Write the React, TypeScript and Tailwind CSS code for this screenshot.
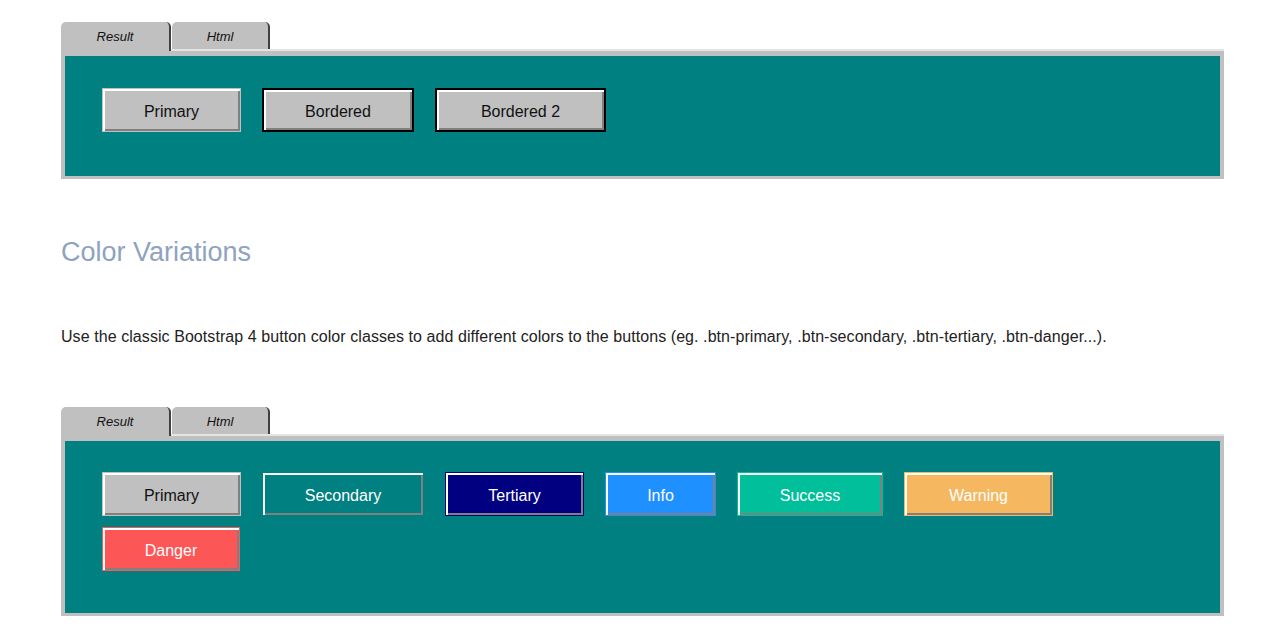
import React from "react";

const font = { fontFamily: '"Liberation Sans", Arial, sans-serif' };

function Tabs() {
  return (
    <div className="flex items-end h-[27px]">
      <div className="relative z-10 w-[110px] h-[29px] -mb-[2px] bg-[#c0c0c0] rounded-t-[5px] border-r-2 border-[#404040] flex items-start justify-center pt-[5px] text-[13px] italic text-[#111]">
        Result
      </div>
      <div className="w-[98px] h-[27px] ml-px bg-[#c0c0c0] rounded-t-[5px] border-r-2 border-[#404040] flex items-start justify-center pt-[5px] text-[13px] italic text-[#111]">
        Html
      </div>
    </div>
  );
}

function Panel({ children, top, bottom }: { children: React.ReactNode; top: string; bottom: string }) {
  return (
    <div className="w-[1163px]">
      <Tabs />
      <div className="border-t-[2px] border-[#e4e4e4] bg-[#c0c0c0] px-[4px] pt-[5px] pb-[3px]">
        <div className={`bg-[#008080] pl-[37px] ${top} ${bottom} flex flex-wrap gap-x-[21px] gap-y-[11px] pr-8`}>
          {children}
        </div>
      </div>
    </div>
  );
}

function Btn({ label, cls, text, w }: { label: string; cls: string; text: string; w: string }) {
  return (
    <button
      className={`h-[44px] ${w} ${cls} ${text} pt-[3px] text-[16px] flex items-center justify-center shadow-[inset_2px_2px_0_#ffffff,inset_-2px_-2px_0_#808080]`}
      style={font}
    >
      {label}
    </button>
  );
}

export default function App() {
  return (
    <div className="bg-white min-h-[640px] pl-[61px] pt-[22px]" style={font}>
      <Panel top="pt-[32px]" bottom="pb-[44px]">
        <Btn label="Primary" w="w-[139px]" cls="bg-[#c0c0c0] border border-[#c0c0c0]" text="text-[#111]" />
        <Btn label="Bordered" w="w-[152px]" cls="bg-[#c0c0c0] border-2 border-black" text="text-[#111]" />
        <Btn label="Bordered 2" w="w-[171px]" cls="bg-[#c0c0c0] border-2 border-black" text="text-[#111]" />
      </Panel>

      <h2 className="mt-[58px] text-[27px] leading-[30px] text-[#8fa2c0]">Color Variations</h2>
      <p className="mt-[60px] text-[16px] leading-[20px] tracking-[0.07px] text-[#222]">
        Use the classic Bootstrap 4 button color classes to add different colors to the buttons (eg. .btn-primary, .btn-secondary, .btn-tertiary, .btn-danger...).
      </p>

      <div className="mt-[60px]">
        <Panel top="pt-[31px]" bottom="pb-[42px]">
          <Btn label="Primary" w="w-[139px]" cls="bg-[#c0c0c0] border border-[#c0c0c0]" text="text-[#111]" />
          <Btn label="Secondary" w="w-[162px]" cls="bg-[#008080] border border-[#008080]" text="text-white" />
          <Btn label="Tertiary" w="w-[139px]" cls="bg-[#000080] border border-[#000080]" text="text-white" />
          <Btn label="Info" w="w-[111px]" cls="bg-[#1e90ff] border border-[#1e90ff]" text="text-white" />
          <Btn label="Success" w="w-[146px]" cls="bg-[#00bf9a] border border-[#00bf9a]" text="text-white" />
          <Btn label="Warning" w="w-[149px]" cls="bg-[#f5b75f] border border-[#f5b75f]" text="text-white" />
          <Btn label="Danger" w="w-[138px]" cls="bg-[#fd5656] border border-[#fd5656]" text="text-white" />
        </Panel>
      </div>
    </div>
  );
}
